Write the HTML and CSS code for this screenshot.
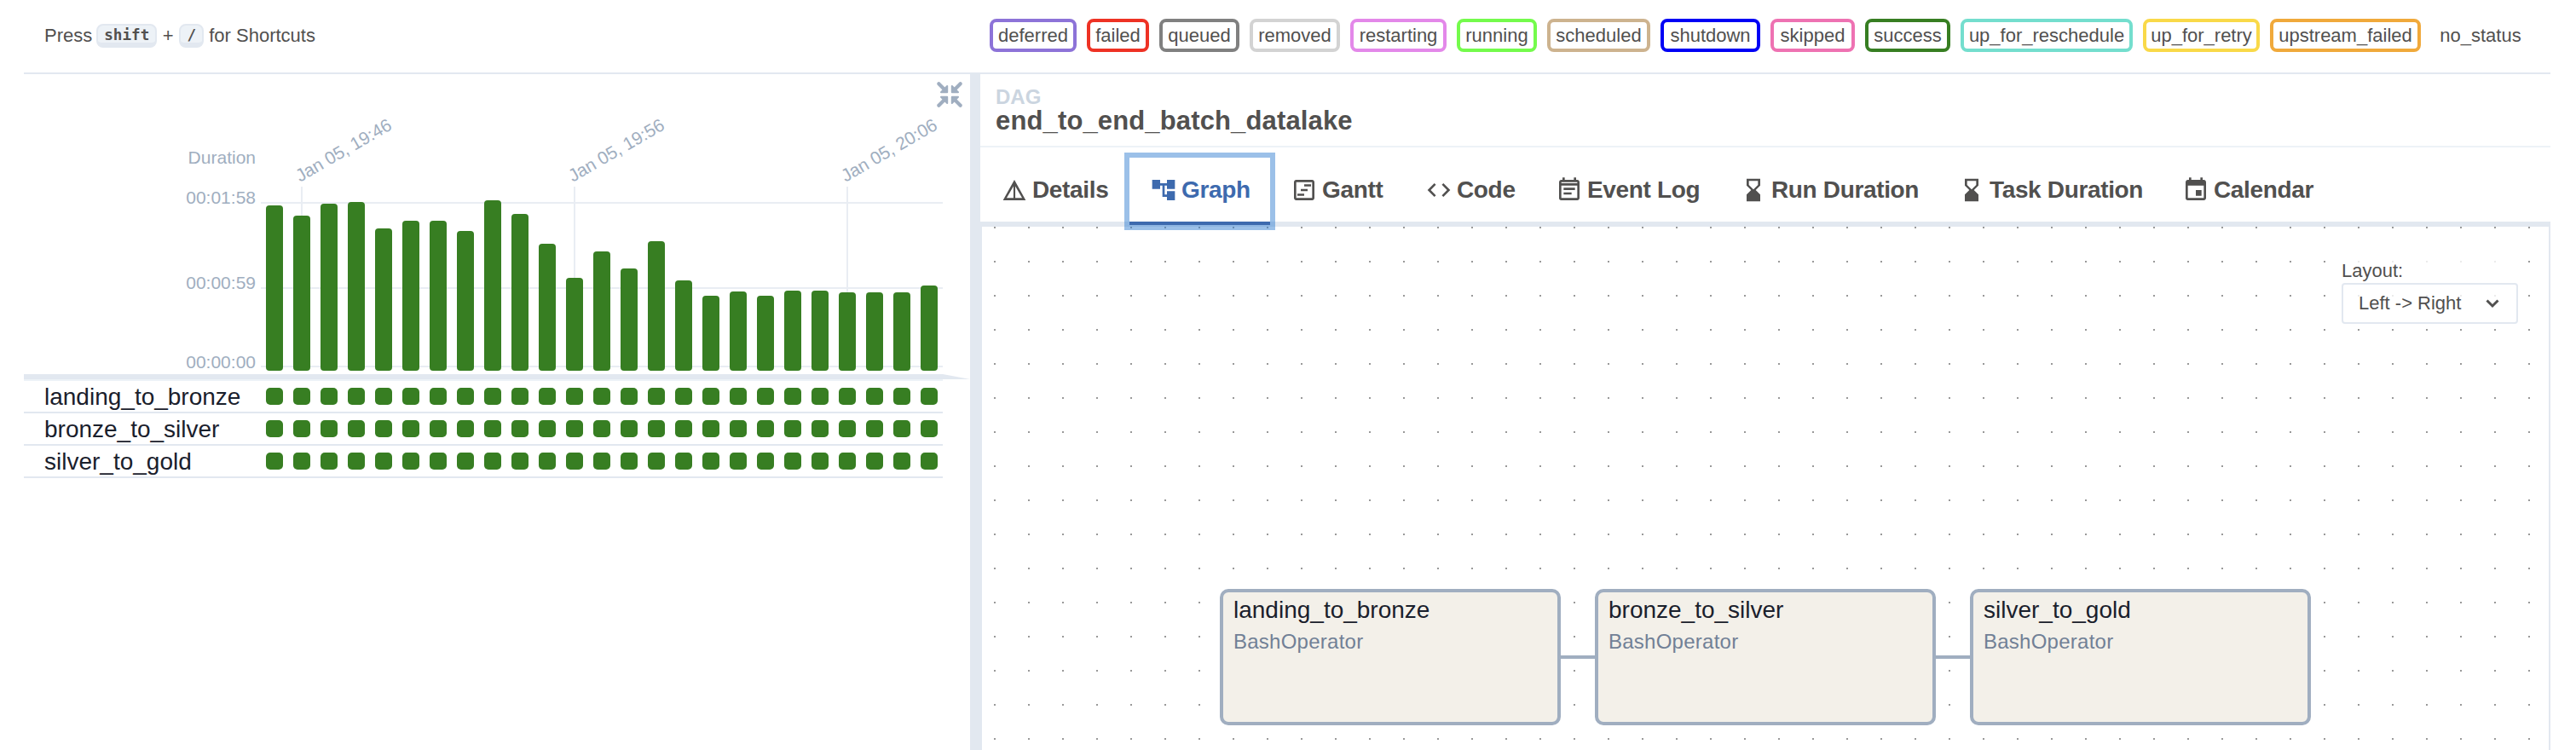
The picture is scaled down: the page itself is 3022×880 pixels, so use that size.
FILE: index.html
```html
<!DOCTYPE html>
<html lang="en">
<head>
<meta charset="utf-8">
<title>end_to_end_batch_datalake - Grid</title>
<link rel="stylesheet" href="styles.css">
</head>
<body>
<header class="topbar">
  <div class="shortcuts"><span>Press</span><kbd>shift</kbd><span class="plus">+</span><kbd class="slash">/</kbd><span>for Shortcuts</span></div>
  <div class="legend">
    <span class="badge deferred">deferred</span><span class="badge failed">failed</span><span class="badge queued">queued</span><span class="badge removed">removed</span><span class="badge restarting">restarting</span><span class="badge running">running</span><span class="badge scheduled">scheduled</span><span class="badge shutdown">shutdown</span><span class="badge skipped">skipped</span><span class="badge success">success</span><span class="badge up_for_reschedule">up_for_reschedule</span><span class="badge up_for_retry">up_for_retry</span><span class="badge upstream_failed">upstream_failed</span><span class="badge no_status">no_status</span>
  </div>
</header>
<main class="main">
  <section class="grid">
    <svg class="collapse" width="32" height="32" viewBox="0 0 32 32" fill="#a0aec0" stroke="#a0aec0" stroke-width="4.200" stroke-linecap="round" stroke-linejoin="round">
      <path d="M3.300 3.300 11 11"/><path d="M28.700 3.300 21 11"/><path d="M3.300 28.700 11 21"/><path d="M28.700 28.700 21 21"/>
      <path stroke-width="2" d="M13.200 6v7.200H6zM18.800 6v7.200H26zM13.200 26v-7.200H6zM18.800 26v-7.200H26z"/>
    </svg>
    <div class="chart">
      <div class="axis"><span class="a-title">Duration</span><span class="a-max">00:01:58</span><span class="a-mid">00:00:59</span><span class="a-min">00:00:00</span></div>
      <div class="plot">
        <i class="hline h1"></i><i class="hline h2"></i><i class="hline h3"></i>
        <div class="bars" id="bars"></div>
      </div>
    </div>
    <div class="sep"></div>
    <div class="task"><span class="name">landing_to_bronze</span><span class="cells"></span></div>
    <div class="task"><span class="name">bronze_to_silver</span><span class="cells"></span></div>
    <div class="task"><span class="name">silver_to_gold</span><span class="cells"></span></div>
  </section>
  <section class="details">
    <div class="crumb"><div class="kind">DAG</div><div class="dagname">end_to_end_batch_datalake</div></div>
    <nav class="tabs">
      <a class="tab t1"><svg viewBox="0 0 24 24"><path d="M12 3 2 21h20zM11.200 8.600V19H5.200zM12.800 19V8.600L18.800 19z"/></svg><span>Details</span></a>
      <a class="tab t2 active"><svg viewBox="0 0 24 24"><path d="M22 11V3h-7v3H9V3H2v8h7V8h2v10h4v3h7v-8h-7v3h-2V8h2v3z"/></svg><span>Graph</span></a>
      <a class="tab t3"><svg viewBox="0 0 24 24"><path d="M19 5v14H5V5h14m0-2H5c-1.100 0-2 .9-2 2v14c0 1.100.9 2 2 2h14c1.100 0 2-.9 2-2V5c0-1.100-.9-2-2-2z"/><path d="M12 7h6v1.800h-6zM9 11.100h6v1.800H9zM6 15.200h6V17H6z"/></svg><span>Gantt</span></a>
      <a class="tab t4"><svg viewBox="0 0 24 24"><path d="M9.400 16.600 4.800 12l4.600-4.600L8 6l-6 6 6 6 1.400-1.400zm5.200 0 4.600-4.600-4.600-4.600L16 6l6 6-6 6-1.400-1.400z"/></svg><span>Code</span></a>
      <a class="tab t5"><svg viewBox="0 0 24 24"><path d="M17 10H7v2h10v-2zm2-7h-1V1h-2v2H8V1H6v2H5c-1.110 0-1.990.9-1.990 2L3 19a2 2 0 0 0 2 2h14c1.100 0 2-.9 2-2V5c0-1.100-.9-2-2-2zm0 16H5V8h14v11zm0-13H5V5h14v1zm-5 8H7v2h7v-2z"/></svg><span>Event Log</span></a>
      <a class="tab t6"><svg viewBox="0 0 24 24"><path d="m18 22-.010-6L14 12l3.990-4.010L18 2H6v6l4 4-4 3.990V22h12zM8 7.500V4h8v3.500l-4 4-4-4z"/></svg><span>Run Duration</span></a>
      <a class="tab t7"><svg viewBox="0 0 24 24"><path d="m18 22-.010-6L14 12l3.990-4.010L18 2H6v6l4 4-4 3.990V22h12zM8 7.500V4h8v3.500l-4 4-4-4z"/></svg><span>Task Duration</span></a>
      <a class="tab t8"><svg viewBox="0 0 24 24"><path d="M17 12h-5v5h5v-5zM16 1v2H8V1H6v2H5c-1.110 0-1.990.9-1.990 2L3 19a2 2 0 0 0 2 2h14c1.100 0 2-.9 2-2V5c0-1.100-.9-2-2-2h-1V1h-2zm3 18H5V8h14v11z"/></svg><span>Calendar</span></a>
    </nav>
    <div class="canvas">
      <div class="layout"><div class="layout-label">Layout:</div><div class="select"><span>Left -&gt; Right</span><svg width="16" height="12" viewBox="0 0 16 12" fill="none" stroke="#51504f" stroke-width="3"><path d="M1.500 2.500 8 9l6.500-6.500"/></svg></div></div>
      <div class="node n1"><div class="title">landing_to_bronze</div><div class="op">BashOperator</div></div>
      <i class="edge e1"></i>
      <div class="node n2"><div class="title">bronze_to_silver</div><div class="op">BashOperator</div></div>
      <i class="edge e2"></i>
      <div class="node n3"><div class="title">silver_to_gold</div><div class="op">BashOperator</div></div>
    </div>
  </section>
</main>
<script src="grid.js"></script>
</body>
</html>
```
FILE: styles.css
```css
* { box-sizing: border-box; }
body { margin: 0; height: 880px; overflow: hidden; padding: 0 30px 0 28px; background: #fff; color: #51504f; font-family: "Liberation Sans", Arial, sans-serif; font-size: 22px; }
.topbar { height: 87px; border-bottom: 2px solid #e2e8f0; display: flex; justify-content: space-between; align-items: flex-start; padding: 22px 24px 0; }
.shortcuts { display: flex; line-height: 39px; white-space: nowrap; }
kbd { height: 28px; margin: 6px 7px 0 5px; width: 71px; background: #edf2f7; border: 2px solid #e2e8f0; border-bottom-width: 6px; border-radius: 8px; font: bold 17.600px/22px "DejaVu Sans Mono", monospace; text-align: center; }
kbd.slash { width: 29px; margin-left: 7px; margin-right: 6px; }
.plus { width: 12px; display: flex; justify-content: center; }
.legend { display: flex; gap: 12px; }
.badge { height: 39px; border: 4px solid transparent; border-radius: 8px; display: flex; justify-content: center; line-height: 31px; white-space: nowrap; }
.deferred { width: 102px; border-color: #8d73d8; }
.failed { width: 73px; border-color: #ee3224; }
.queued { width: 94px; border-color: #808080; }
.removed { width: 106px; border-color: #d3d3d3; }
.restarting { width: 113px; border-color: #e388e9; }
.running { width: 94px; border-color: #74fb4c; }
.scheduled { width: 121px; border-color: #cdb38f; }
.shutdown { width: 117px; border-color: #0000f5; }
.skipped { width: 99px; border-color: #ee72b2; }
.success { width: 100px; border-color: #377e22; }
.up_for_reschedule { width: 202px; border-color: #74dece; }
.up_for_retry { width: 137px; border-color: #f9d949; }
.upstream_failed { width: 177px; border-color: #f0a93b; }
.no_status { width: 116px; }

.main { display: flex; height: 793px; }
.grid { width: 1110px; position: relative; }
.collapse { position: absolute; left: 1070px; top: 8px; }
.chart { height: 352px; display: flex; }
.axis { width: 272px; position: relative; color: #a0aec0; font-size: 21px; line-height: 24px; text-align: right; }
.axis span { position: absolute; right: 0; }
.a-title { top: 86px; }
.a-max { top: 133px; }
.a-mid { top: 233px; }
.a-min { top: 326px; }
.plot { position: relative; width: 800px; margin-left: 6px; }
.hline { position: absolute; left: 0; right: 0; height: 2px; background: #e9edf3; }
.h1 { top: 150px; }
.h2 { top: 250px; }
.h3 { top: 342px; }
.bars { height: 348px; padding: 0 6px; display: flex; gap: 12px; align-items: flex-end; position: relative; }
.slot { width: 20px; height: 216px; display: flex; align-items: flex-end; position: relative; }
.slot.tick { background: linear-gradient(#e9edf3, #e9edf3) 9px 0 / 2px 100% no-repeat; }
.bar { width: 20px; border-radius: 4px; background: #377e22; }
.when { position: absolute; left: 8px; top: -24px; color: #a0aec0; font-size: 21px; letter-spacing: -0.1px; line-height: 24px; white-space: nowrap; transform: rotate(-30deg); transform-origin: 0 19px; }
.sep { width: 1110px; height: 6px; background: #e2e8f0; clip-path: polygon(0 0, 1078px 0, 1110px 6px, 0 6px); }
.task { width: 1078px; height: 38px; border-bottom: 2px solid #e2e8f0; display: flex; padding-left: 24px; }
.sep + .task { height: 40px; border-top: 2px solid #edf2f7; }
.name { width: 260px; height: 36px; color: #1a202c; font-size: 28px; line-height: 38px; white-space: nowrap; }
.cells { display: flex; gap: 12px; align-items: center; }
.cells i { width: 20px; height: 20px; border-radius: 5px; background: #377e22; }

.details { width: 1854px; border-left: 12px solid #e2e8f0; display: flex; flex-direction: column; }
.crumb { height: 86px; border-bottom: 2px solid #edf2f7; padding: 12px 18px 0; font-weight: bold; white-space: nowrap; }
.kind { color: #cbd5e0; font-size: 24px; line-height: 29px; }
.dagname { font-size: 31px; line-height: 28px; letter-spacing: 0.14px; }
.tabs { height: 93px; border-bottom: 6px solid #e2e8f0; display: flex; }
.tab { height: 91px; padding: 8px 0 0 24px; display: flex; align-items: center; font-size: 28px; font-weight: bold; letter-spacing: -0.35px; white-space: nowrap; }
.tab svg { width: 32px; height: 32px; margin-right: 5px; fill: #51504f; }
.t1 { width: 175px; } .t2 { width: 165px; } .t3 { width: 158px; } .t4 { width: 153px; } .t5 { width: 216px; } .t6 { width: 256px; } .t7 { width: 263px; } .t8 { width: 204px; }
.tab.active { color: #3d6aae; border-bottom: 4px solid #3d6aae; margin-top: 12px; height: 79px; padding-top: 0; box-shadow: 0 0 0 6px rgba(56,129,209,.5); z-index: 2; }
.tab.active svg { fill: #3d6aae; }
.canvas { flex: 1; position: relative; overflow: hidden; border: solid #e2e8f0; border-width: 0 2px; background: conic-gradient(from 270deg at 2px 2px, #999 90deg, transparent 0) 14px 0 / 40px 40px; }
.layout { position: absolute; left: 1595px; top: 34px; width: 207px; background: rgba(255,255,255,.8); }
.layout-label { height: 32px; line-height: 35px; }
.select { height: 48px; border: 2px solid #e2e8f0; border-radius: 4px; display: flex; justify-content: space-between; align-items: center; padding: 0 20px 0 18px; line-height: 44px; }
.node { position: absolute; top: 425px; width: 400px; height: 160px; border: 4px solid #a0aec0; border-radius: 10px; background: #f3f0e9; padding: 4px 12px; white-space: nowrap; }
.n1 { left: 279px; } .n2 { left: 719px; } .n3 { left: 1159px; }
.title { color: #1a202c; font-size: 28px; line-height: 34px; }
.op { color: #718096; font-size: 24px; line-height: 40px; letter-spacing: 0.25px; }
.edge { position: absolute; top: 503px; width: 40px; height: 4px; background: #a0aec0; }
.e1 { left: 679px; } .e2 { left: 1119px; }
```
FILE: grid.js
```js
// Run durations as bar heights, in pixels
const heights = [194, 182, 196, 198, 167, 176, 176, 164, 200, 184, 149, 109, 140, 120, 152, 106, 88, 93, 88, 94, 94, 92, 92, 92, 100];
const ticks = { 1: 'Jan 05, 19:46', 11: 'Jan 05, 19:56', 21: 'Jan 05, 20:06' };
document.getElementById('bars').innerHTML = heights.map((h, i) =>
  `<div class="slot${ticks[i] ? ' tick' : ''}">${ticks[i] ? `<span class="when">${ticks[i]}</span>` : ''}<div class="bar" style="height:${h}px"></div></div>`).join('');
document.querySelectorAll('.cells').forEach(c => { c.innerHTML = '<i></i>'.repeat(heights.length); });
```
